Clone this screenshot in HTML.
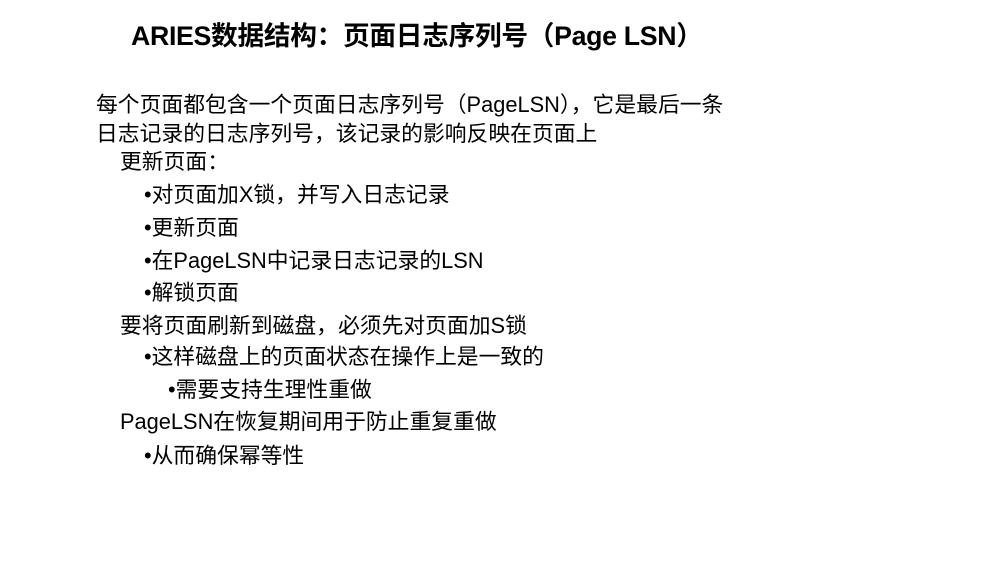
<!DOCTYPE html>
<html><head><meta charset="utf-8"><style>
body{margin:0;width:1007px;height:567px;background:#fff;position:relative;overflow:hidden;font-family:"Liberation Sans","Noto Sans CJK SC",sans-serif;color:#000}
.t{position:absolute;left:131px;top:14px;font-size:26.7px;font-weight:bold;white-space:nowrap;letter-spacing:-0.3px}
.l{position:absolute;font-size:21.8px;white-space:nowrap;line-height:24px}
</style></head><body>
<div class="t">ARIES数据结构：页面日志序列号（Page LSN）</div>
<div class="l" style="left:96px;top:93px">每个页面都包含一个页面日志序列号（PageLSN），它是最后一条</div>
<div class="l" style="left:96px;top:122px">日志记录的日志序列号，该记录的影响反映在页面上</div>
<div class="l" style="left:120px;top:150px">更新页面：</div>
<div class="l" style="left:144px;top:183px">•对页面加X锁，并写入日志记录</div>
<div class="l" style="left:144px;top:216px">•更新页面</div>
<div class="l" style="left:144px;top:249px">•在PageLSN中记录日志记录的LSN</div>
<div class="l" style="left:144px;top:281px">•解锁页面</div>
<div class="l" style="left:120px;top:314px">要将页面刷新到磁盘，必须先对页面加S锁</div>
<div class="l" style="left:144px;top:345px">•这样磁盘上的页面状态在操作上是一致的</div>
<div class="l" style="left:168px;top:378px">•需要支持生理性重做</div>
<div class="l" style="left:120px;top:410px">PageLSN在恢复期间用于防止重复重做</div>
<div class="l" style="left:144px;top:444px">•从而确保幂等性</div>
</body></html>
